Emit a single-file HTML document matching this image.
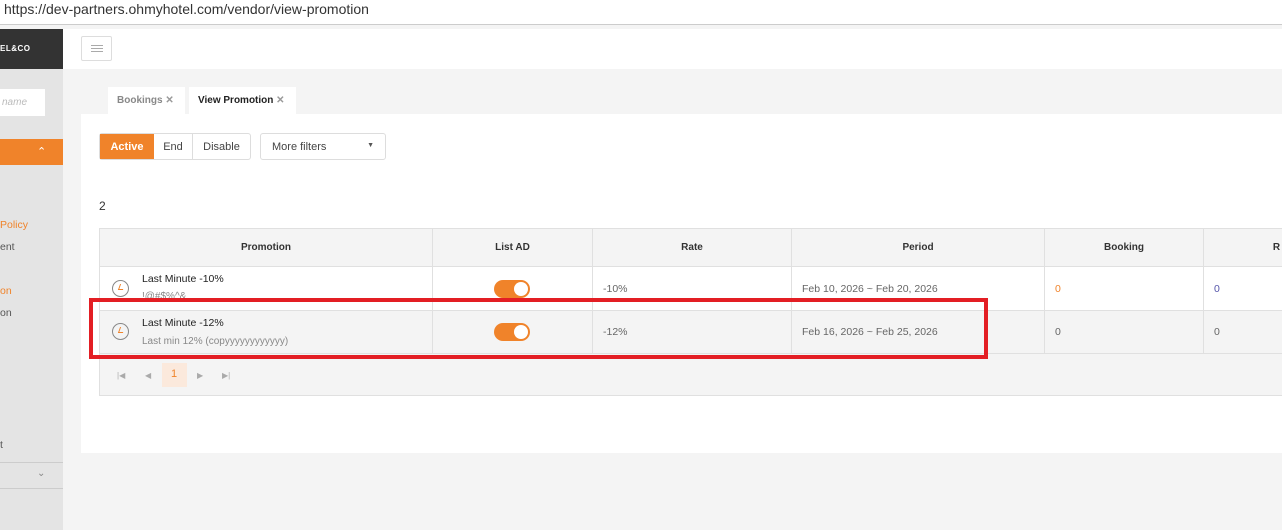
<!DOCTYPE html>
<html><head><meta charset="utf-8"><style>
*{box-sizing:border-box;margin:0;padding:0}
body{width:1282px;height:530px;overflow:hidden;background:#f4f4f4;font-family:"Liberation Sans",sans-serif;position:relative;font-size:11px;color:#444}
.a{position:absolute}
.url{left:0;top:0;width:1282px;height:25px;background:#fff;border-bottom:1px solid #ccc;font-size:14px;color:#333;padding:1px 0 0 4px}
.side{left:0;top:29px;width:63px;height:501px;background:#e4e4e4}
.logo{left:0;top:29px;width:63px;height:40px;background:#333;color:#fff;font-weight:bold;font-size:8px;padding:15px 0 0 0;letter-spacing:.5px}
.hdr{left:63px;top:29px;width:1219px;height:40px;background:#fff}
.tab{height:27px;background:#fff;font-size:10px;font-weight:bold;padding:8px 0 0 9px}
td,th{border:1px solid #e0e0e0;font-size:10.5px;text-align:left;padding-left:10px}
th{background:#f4f4f4;text-align:center;font-weight:bold;color:#333;padding:0;font-size:10px}
table{border-collapse:collapse;position:absolute;left:99px;top:228px;width:1250px;table-layout:fixed}
.tg{width:36px;height:18px;border-radius:9px;background:#f0832a;position:relative;margin-left:51px}
.tg:after{content:"";position:absolute;right:2px;top:2px;width:14px;height:14px;border-radius:50%;background:#fff}
.clk{position:absolute;left:12px;width:17px;height:17px;border:1.5px solid #888;border-radius:50%}
.clk:after{content:"";position:absolute;left:6px;top:3px;width:4px;height:5px;border-left:1.5px solid #f0832a;border-bottom:1.5px solid #f0832a;transform:skewX(-20deg)}
.pg{position:absolute;top:17px;color:#aaa;font-size:8px}
</style></head><body>
<div class="a url">https://dev-partners.ohmyhotel.com/vendor/view-promotion</div>
<div class="a side"></div>
<div class="a logo">EL&amp;CO</div>
<div class="a" style="left:0;top:89px;width:45px;height:27px;background:#fff;color:#bbb;font-style:italic;font-size:10px;padding:8px 0 0 2px">name</div>
<div class="a" style="left:0;top:139px;width:63px;height:26px;background:#f0832a;color:#fff;font-size:11px;padding:6px 0 0 37px">⌃</div>
<div class="a" style="left:0;top:219px;color:#f0832a;font-size:10.5px">Policy</div>
<div class="a" style="left:0;top:241px;color:#555;font-size:10.5px">ent</div>
<div class="a" style="left:0;top:285px;color:#f0832a;font-size:10.5px">on</div>
<div class="a" style="left:0;top:307px;color:#555;font-size:10.5px">on</div>
<div class="a" style="left:0;top:439px;color:#555;font-size:10.5px">t</div>
<div class="a" style="left:0;top:462px;width:63px;height:27px;border-top:1px solid #ccc;border-bottom:1px solid #ccc;color:#888;font-size:10px;padding:5px 0 0 37px">⌄</div>
<div class="a hdr"></div>
<div class="a" style="left:81px;top:36px;width:31px;height:25px;border:1px solid #ddd;border-radius:2px;padding:8px 0 0 9px"><div style="width:12px;border-top:1px solid #aaa;height:3px"></div><div style="width:12px;border-top:1px solid #aaa;height:3px"></div><div style="width:12px;border-top:1px solid #aaa"></div></div>
<div class="a tab" style="left:108px;top:87px;width:77px;color:#888">Bookings <span style="color:#999">✕</span></div>
<div class="a tab" style="left:189px;top:87px;width:107px;color:#222">View Promotion <span style="color:#999">✕</span></div>
<div class="a" style="left:81px;top:114px;width:1201px;height:339px;background:#fff"></div>
<div class="a" style="left:99px;top:133px;width:152px;height:27px;border:1px solid #ddd;border-radius:3px;display:flex;font-size:11px">
<div style="width:54px;background:#f0832a;color:#fff;font-weight:bold;text-align:center;padding-top:7px">Active</div>
<div style="width:39px;text-align:center;padding-top:7px;border-right:1px solid #ddd">End</div>
<div style="flex:1;text-align:center;padding-top:7px">Disable</div></div>
<div class="a" style="left:260px;top:133px;width:126px;height:27px;border:1px solid #ddd;border-radius:3px;font-size:11px;padding:7px 0 0 11px">More filters<span style="position:absolute;right:11px;top:8px;font-size:7px;color:#555">▼</span></div>
<div class="a" style="left:99px;top:199px;font-size:12px;color:#333">2</div>
<table>
<colgroup><col style="width:333px"><col style="width:160px"><col style="width:199px"><col style="width:253px"><col style="width:159px"><col style="width:146px"></colgroup>
<tr style="height:38px"><th>Promotion</th><th>List AD</th><th>Rate</th><th>Period</th><th>Booking</th><th>R</th></tr>
<tr style="height:44px;background:#fff"><td style="position:relative;padding-left:42px"><div class="clk" style="top:13px"></div><div style="color:#222;font-size:10.5px;margin-top:-6px">Last Minute -10%</div><div style="color:#888;font-size:10px;margin-top:6px;height:7px;overflow:hidden">!@#$%^&amp;</div></td><td><div class="tg"></div></td><td style="color:#666">-10%</td><td style="color:#666">Feb 10, 2026 ~ Feb 20, 2026</td><td style="color:#f0832a">0</td><td style="color:#55a">0</td></tr>
<tr style="height:43px;background:#f4f4f4"><td style="position:relative;padding-left:42px"><div class="clk" style="top:12px"></div><div style="color:#222;font-size:10.5px">Last Minute -12%</div><div style="color:#888;font-size:10px;margin-top:7px">Last min 12% (copyyyyyyyyyyyy)</div></td><td><div class="tg"></div></td><td style="color:#666">-12%</td><td style="color:#666">Feb 16, 2026 ~ Feb 25, 2026</td><td style="color:#666">0</td><td style="color:#666">0</td></tr>
<tr style="height:42px;background:#f4f4f4"><td colspan="6" style="position:relative">
<span style="position:absolute;left:62px;top:9px;width:25px;height:24px;background:#fbe9dc"></span>
<span class="pg" style="left:17px">|◀</span><span class="pg" style="left:45px">◀</span>
<span class="pg" style="left:71px;top:14px;color:#f0832a;font-size:11px">1</span>
<span class="pg" style="left:97px">▶</span><span class="pg" style="left:122px">▶|</span></td></tr>
</table>
<div class="a" style="left:89px;top:298px;width:899px;height:61px;border:4px solid #e31e24"></div>
</body></html>
